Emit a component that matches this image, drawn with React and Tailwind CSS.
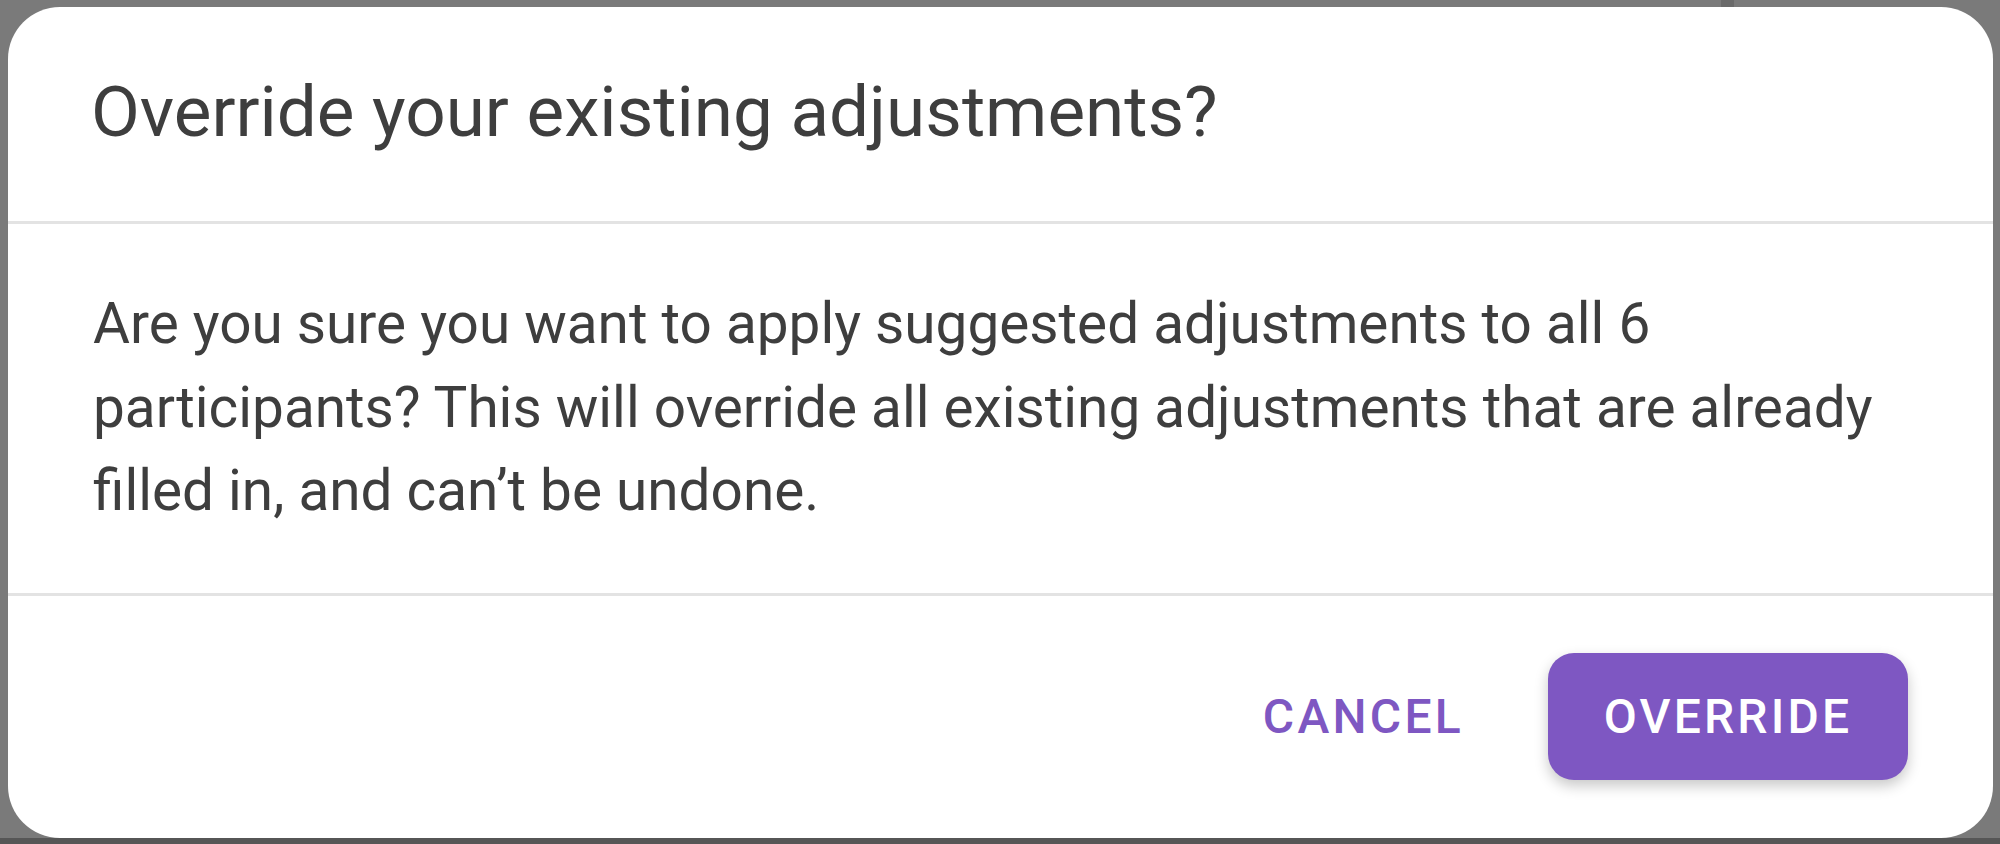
import React from "react";

function App() {
  return (
    <div className="w-[2000px] h-[844px] bg-[#7a7a7a] flex flex-col overflow-hidden" style={{ fontFamily: "Roboto, 'Noto Sans', sans-serif" }}>
      <div className="h-[7px] flex shrink-0">
        <div className="ml-[1721px] w-[13px] bg-[#6a6a6a]" />
      </div>
      <div className="flex-1 pl-[8px] pr-[7px] flex">
        <div className="flex-1 bg-white rounded-[52px] flex flex-col overflow-hidden">
          <div className="pt-[63px] pb-[67px] pl-[83px] pr-[93px] border-b-[3px] border-[#e3e3e3]">
            <h2 className="text-[71px] leading-[84px] font-normal text-[#3e3e3e]">
              Override your existing adjustments?
            </h2>
          </div>
          <div className="pt-[58px] pb-[60px] pl-[85px] pr-[93px] border-b-[3px] border-[#e3e3e3]">
            <p className="text-[56.7px] leading-[83.5px] text-[#3e3e3e]">
              Are you sure you want to apply suggested adjustments to all 6 participants? This will override all existing adjustments that are already filled in, and can’t be undone.
            </p>
          </div>
          <div className="flex-1 flex items-center justify-end gap-[84px] pr-[85px]">
            <button className="text-[48px] font-medium tracking-[0.068em] text-[#7e57c2] uppercase">
              Cancel
            </button>
            <button className="w-[360px] h-[127px] rounded-[26px] bg-[#7e57c2] text-white text-[48px] font-medium tracking-[0.066em] uppercase shadow-[0_6px_14px_rgba(0,0,0,0.22)]">
              Override
            </button>
          </div>
        </div>
      </div>
      <div className="h-[6px] shrink-0 bg-[#565656]" />
    </div>
  );
}

export default App;
